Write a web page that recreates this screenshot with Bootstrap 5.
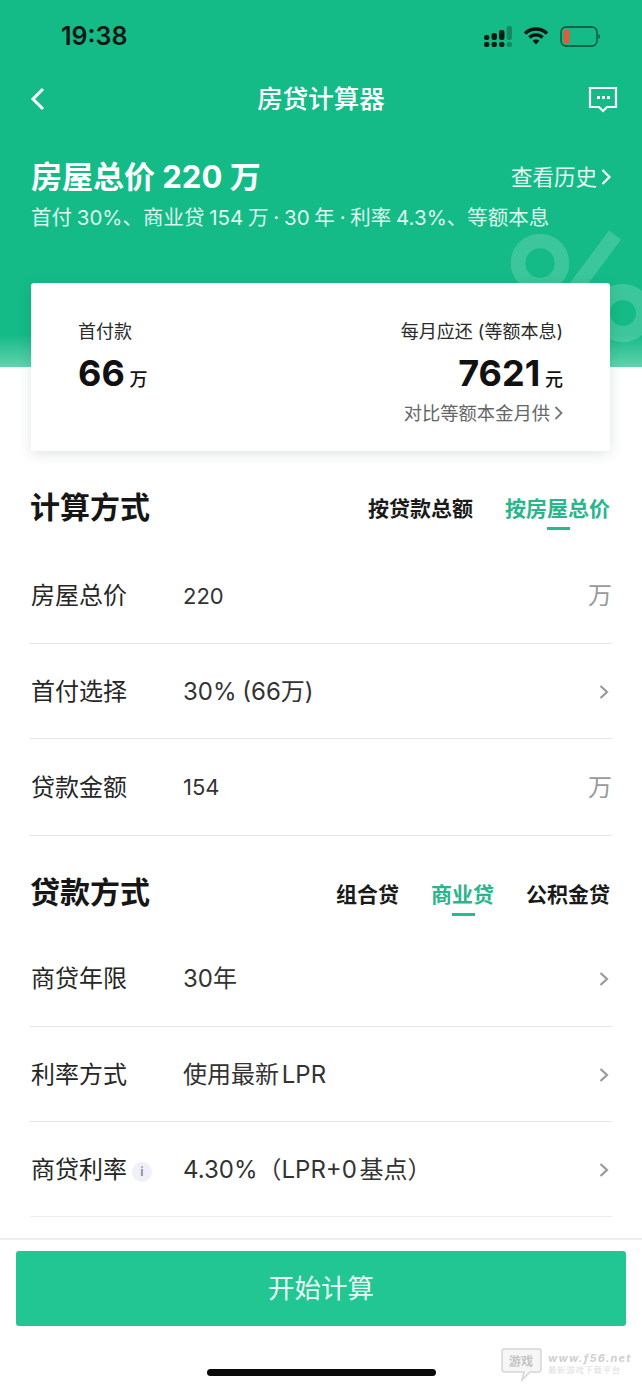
<!DOCTYPE html>
<html lang="zh-CN">
<head>
  <meta charset="UTF-8">
  <title>房贷计算器</title>
  <meta name="viewport" content="width=device-width, initial-scale=1">
  <link href="https://cdn.jsdelivr.net/npm/bootstrap@5.3.3/dist/css/bootstrap.min.css" rel="stylesheet">
  <style>
    html, body { height: 100%; }
    body {
      background: #fff;
      color: #1c1c1c;
      font-family: Inter, "Noto Sans CJK SC", sans-serif;
      overflow: hidden;
    }
    .phone { width: 642px; height: 1389px; position: relative; overflow: hidden; }
    .hero {
      height: 367px;
      background: linear-gradient(to bottom, #15bb87 0, #15bb87 335px, #62d2ae 367px);
      color: #fff;
      position: relative;
      overflow: hidden;
    }
    .hero-pct { position: absolute; left: 500px; top: 225px; }
    .status-row { height: 72px; padding: 0 41px 0 61px; }
    .status-icons { gap: 11px; }
    .clock { font-size: 25px; font-weight: 600; color: #0d1a14; line-height: 33px; }
    .title-row { height: 54px; padding: 0 24px 0 30px; }
    .back-slot { width: 24px; }
    .page-title { font-size: 25.5px; font-weight: 500; line-height: 54px; }
    .summary { padding: 30px 31px 0; }
    .summary-main { font-size: 31px; font-weight: 700; line-height: 42px; }
    .summary-link { font-size: 21.5px; line-height: 42px; color: #e8f8f2; }
    .summary-sub { font-size: 20.5px; line-height: 30px; margin-top: 5px; color: #dff6ee; white-space: nowrap; word-spacing: -1px; }
    .result-box {
      width: 579px;
      height: 168px;
      margin: -84px 0 0 31px;
      padding: 35px 47px 0;
      background: #fff;
      position: relative;
      border-radius: 3px;
      box-shadow: 0 3px 14px rgba(0, 40, 30, .12);
    }
    .result-label { font-size: 18px; line-height: 28px; color: #2a2a2a; }
    .result-num { font-size: 36px; font-weight: 700; line-height: 46px; color: #111; margin-top: 4px; }
    .result-unit { font-size: 18px; font-weight: 500; }
    .result-link { font-size: 18.3px; line-height: 26px; color: #666; margin-top: -3px; }
    .section-head { padding: 0 32px 0 30px; }
    .head-one { height: 97px; padding-top: 15px; }
    .head-two { height: 95px; padding-top: 17px; }
    .tabs-two { gap: 32px; margin-top: 4px; }
    .tabs-three { gap: 32px; margin-top: 6px; }
    .section-name { font-size: 30px; font-weight: 700; color: #161616; line-height: 40px; }
    .tab-item { font-size: 21px; font-weight: 600; color: #1a1a1a; position: relative; line-height: 30px; }
    .tab-item.on { color: #2ab68c; }
    .tab-item.on::after {
      content: "";
      position: absolute;
      left: 50%;
      bottom: -6px;
      width: 23px;
      height: 3px;
      margin-left: -11px;
      background: #22bd8f;
    }
    .form-rows { margin: 0 30px; }
    .form-line { height: 96px; padding-top: 1px; border-bottom: 1px solid #e6e6e6; }
    .form-line.last { border-bottom-color: #ececec; }
    .line-short { height: 95px; }
    .line-tall { height: 97px; }
    .line-label { width: 153px; padding-left: 1px; font-size: 24px; color: #262626; }
    .line-value { font-size: 24px; color: #333; flex: 1; word-spacing: -4px; }
    .line-value.plain-gap { word-spacing: -1px; }
    .line-input { font-size: 22px; color: #333; flex: 1; }
    .line-unit { font-size: 24px; color: #9a9a9a; }
    .line-arrow { margin-right: 3px; }
    .info-dot {
      display: inline-block;
      width: 20px;
      height: 20px;
      margin-left: 5px;
      border-radius: 50%;
      background: #eff0f8;
      color: #8b93a6;
      font-size: 12px;
      font-weight: 700;
      line-height: 20px;
      text-align: center;
      vertical-align: 2px;
    }
    .foot-bar {
      position: absolute;
      left: 0;
      right: 0;
      top: 1238px;
      bottom: 0;
      background: #fff;
      border-top: 2px solid #efefef;
      padding: 11px 16px 0;
    }
    .go-btn {
      display: block;
      width: 100%;
      height: 75px;
      border: 0;
      border-radius: 3px;
      background: #22c693;
      color: #e6f8f2;
      font-size: 26.5px;
      font-weight: 400;
    }
    .home-bar {
      position: absolute;
      left: 207px;
      top: 1369px;
      width: 229px;
      height: 7px;
      border-radius: 4px;
      background: #0a0a0a;
    }
    .wm { position: absolute; left: 500px; top: 1344px; color: #cfcfcf; }
    .wm-site { font-size: 11px; font-weight: 700; font-style: italic; line-height: 12px; letter-spacing: 1.2px; }
    .wm-sub { font-size: 8.5px; line-height: 12px; letter-spacing: .6px; color: #dedede; }
  </style>
</head>
<body>
  <div class="phone">
    <div class="hero">
      <svg class="hero-pct" width="142" height="142" viewBox="0 0 142 142" fill="none" stroke="#fff" stroke-opacity=".17">
        <circle cx="40" cy="38" r="22" stroke-width="14.5"/>
        <path d="M115 10 L17 142" stroke-width="15"/>
        <circle cx="123" cy="88" r="21" stroke-width="16"/>
      </svg>

      <div class="status-row d-flex justify-content-between align-items-center">
        <span class="clock">19:38</span>
        <div class="status-icons d-flex align-items-center">
          <svg width="28" height="21" viewBox="0 0 26 21" preserveAspectRatio="none">
            <g fill="#0a1a14">
              <rect x="0" y="9" width="5" height="5" rx="2"/><rect x="0" y="16" width="5" height="5" rx="2"/>
              <rect x="7" y="7" width="5" height="7" rx="2"/><rect x="7" y="16" width="5" height="5" rx="2"/>
              <rect x="14" y="4" width="5" height="10" rx="2"/><rect x="14" y="16" width="5" height="5" rx="2"/>
            </g>
            <rect x="21" y="0" width="5" height="14" rx="2" fill="#0a1a14" opacity=".3"/>
            <rect x="21" y="16" width="5" height="5" rx="2" fill="#0a1a14" opacity=".3"/>
          </svg>
          <svg width="26" height="20" viewBox="0 0 26 20" fill="none" stroke="#07140f" stroke-width="3.4">
            <path d="M2 7.5 C8 1.5 18 1.5 24 7.5"/>
            <path d="M6.5 11.5 C10 8 16 8 19.5 11.5"/>
            <path d="M13 18.5 L9.6 14.8 C11.4 13.2 14.6 13.2 16.4 14.8 Z" fill="#07140f" stroke="none"/>
          </svg>
          <svg width="41" height="21" viewBox="0 0 41 21" fill="none">
            <rect x="1" y="1" width="36" height="19" rx="5" stroke="#0c4a38" stroke-width="1.3"/>
            <rect x="3.5" y="3.5" width="6" height="14" rx="2.5" fill="#e2593c"/>
            <path d="M38.5 8 C40.5 9 40.5 12 38.5 13 Z" fill="#0c4a38"/>
          </svg>
        </div>
      </div>

      <div class="title-row d-flex justify-content-between align-items-center">
        <div class="back-slot">
          <svg class="d-block" width="16" height="26" viewBox="0 0 16 26" fill="none" stroke="#fff" stroke-width="3">
            <path d="M13 3 L3 13 L13 23"/>
          </svg>
        </div>
        <span class="page-title">房贷计算器</span>
        <svg width="30" height="28" viewBox="0 0 30 28" fill="none" stroke="#fff" stroke-width="2.2">
          <path d="M2 3 H28 V22 H19 L15 26 L11 22 H2 Z"/>
          <g fill="#fff" stroke="none"><rect x="9" y="11" width="3" height="3"/><rect x="14" y="11" width="3" height="3"/><rect x="19" y="11" width="3" height="3"/></g>
        </svg>
      </div>

      <div class="summary">
        <div class="d-flex justify-content-between align-items-center">
          <span class="summary-main">房屋总价 220 万</span>
          <span class="summary-link d-flex align-items-center gap-1">查看历史
            <svg width="10" height="18" viewBox="0 0 10 18" fill="none" stroke="#fff" stroke-width="2.2"><path d="M1.5 2 L8.5 9 L1.5 16"/></svg>
          </span>
        </div>
        <div class="summary-sub">首付 30%、商业贷 154 万 · 30 年 · 利率 4.3%、等额本息</div>
      </div>
    </div>

    <div class="result-box d-flex justify-content-between">
      <div>
        <div class="result-label">首付款</div>
        <div class="result-num">66<span class="result-unit"> 万</span></div>
      </div>
      <div class="text-end">
        <div class="result-label">每月应还 (等额本息)</div>
        <div class="result-num">7621<span class="result-unit"> 元</span></div>
        <div class="result-link d-flex align-items-center justify-content-end gap-1">对比等额本金月供
          <svg width="9" height="16" viewBox="0 0 9 16" fill="none" stroke="#777" stroke-width="1.8"><path d="M1.5 2 L7.5 8 L1.5 14"/></svg>
        </div>
      </div>
    </div>

    <div class="section-head d-flex justify-content-between align-items-center head-one">
      <span class="section-name">计算方式</span>
      <div class="d-flex tabs-two">
        <span class="tab-item">按贷款总额</span>
        <span class="tab-item on">按房屋总价</span>
      </div>
    </div>

    <div class="form-rows">
      <div class="form-line d-flex align-items-center">
        <span class="line-label">房屋总价</span><span class="line-input">220</span><span class="line-unit">万</span>
      </div>
      <div class="form-line line-short d-flex align-items-center">
        <span class="line-label">首付选择</span><span class="line-value plain-gap">30% (66万)</span>
        <svg class="line-arrow" width="10" height="16" viewBox="0 0 10 16" fill="none" stroke="#999" stroke-width="2.2"><path d="M1.5 2 L8 8 L1.5 14"/></svg>
      </div>
      <div class="form-line line-tall d-flex align-items-center">
        <span class="line-label">贷款金额</span><span class="line-input">154</span><span class="line-unit">万</span>
      </div>
    </div>

    <div class="section-head d-flex justify-content-between align-items-center head-two">
      <span class="section-name">贷款方式</span>
      <div class="d-flex tabs-three">
        <span class="tab-item">组合贷</span>
        <span class="tab-item on">商业贷</span>
        <span class="tab-item">公积金贷</span>
      </div>
    </div>

    <div class="form-rows">
      <div class="form-line d-flex align-items-center">
        <span class="line-label">商贷年限</span><span class="line-value">30年</span>
        <svg class="line-arrow" width="10" height="16" viewBox="0 0 10 16" fill="none" stroke="#999" stroke-width="2.2"><path d="M1.5 2 L8 8 L1.5 14"/></svg>
      </div>
      <div class="form-line line-short d-flex align-items-center">
        <span class="line-label">利率方式</span><span class="line-value">使用最新 LPR</span>
        <svg class="line-arrow" width="10" height="16" viewBox="0 0 10 16" fill="none" stroke="#999" stroke-width="2.2"><path d="M1.5 2 L8 8 L1.5 14"/></svg>
      </div>
      <div class="form-line line-short last d-flex align-items-center">
        <span class="line-label">商贷利率<span class="info-dot">i</span></span><span class="line-value">4.30%（LPR+0 基点）</span>
        <svg class="line-arrow" width="10" height="16" viewBox="0 0 10 16" fill="none" stroke="#999" stroke-width="2.2"><path d="M1.5 2 L8 8 L1.5 14"/></svg>
      </div>
    </div>

    <div class="foot-bar">
      <button class="go-btn" type="button">开始计算</button>
    </div>
    <div class="home-bar"></div>

    <div class="wm d-flex align-items-center gap-1">
      <svg width="44" height="40" viewBox="0 0 44 40" fill="#f6f6f6" stroke="#d6d6d6" stroke-width="1.5">
        <path d="M3 5 H39 Q41 5 41 7 V25 Q41 28 38 28 H30 L22 36 L24 28 H5 Q2 28 2 25 V7 Q2 5 3 5 Z"/>
        <text x="21" y="22" text-anchor="middle" font-size="12" font-weight="700" fill="#c4c4c4" stroke="none" font-family="Noto Sans CJK SC, sans-serif">游戏</text>
      </svg>
      <div>
        <div class="wm-site">www.f56.net</div>
        <div class="wm-sub">最新游戏下载平台</div>
      </div>
    </div>
  </div>

  <script src="https://cdn.jsdelivr.net/npm/bootstrap@5.3.3/dist/js/bootstrap.bundle.min.js"></script>
</body>
</html>
